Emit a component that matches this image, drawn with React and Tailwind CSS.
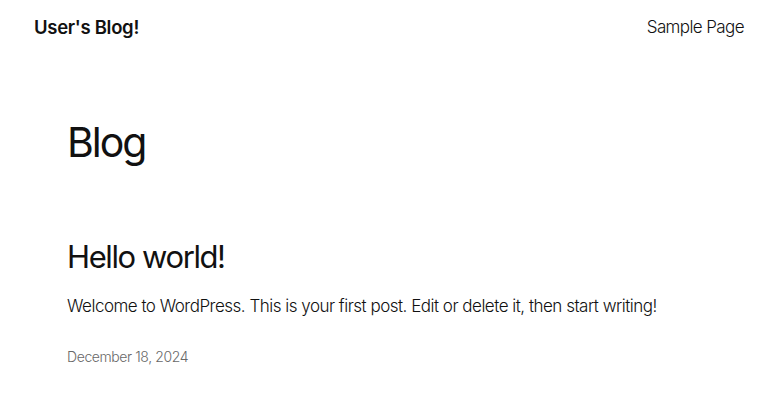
export default function App() {
  return (
    <div className="min-h-[404px] bg-white text-[#111111] font-['Inter',sans-serif]">
      <header className="flex items-center justify-between pl-[34px] pr-[37px] pt-[8px] h-[48px]">
        <a className="text-[18.5px] font-semibold tracking-[-0.3px]">User's Blog!</a>
        <nav className="text-[17px] font-light tracking-[-0.6px]">Sample Page</nav>
      </header>

      <main className="px-[67px]">
        <h1 className="mt-[74px] text-[41px] font-normal leading-none tracking-[-2px]">Blog</h1>

        <article className="mt-[75px]">
          <h2 className="text-[31px] font-normal leading-tight tracking-[-1.4px]">Hello world!</h2>
          <p className="mt-[17px] text-[17px] font-light tracking-[-0.5px]">
            Welcome to WordPress. This is your first post. Edit or delete it, then start writing!
          </p>
          <p className="mt-[27px] text-[14px] font-light text-[#686868] tracking-[-0.4px]">December 18, 2024</p>
        </article>
      </main>
    </div>
  )
}
